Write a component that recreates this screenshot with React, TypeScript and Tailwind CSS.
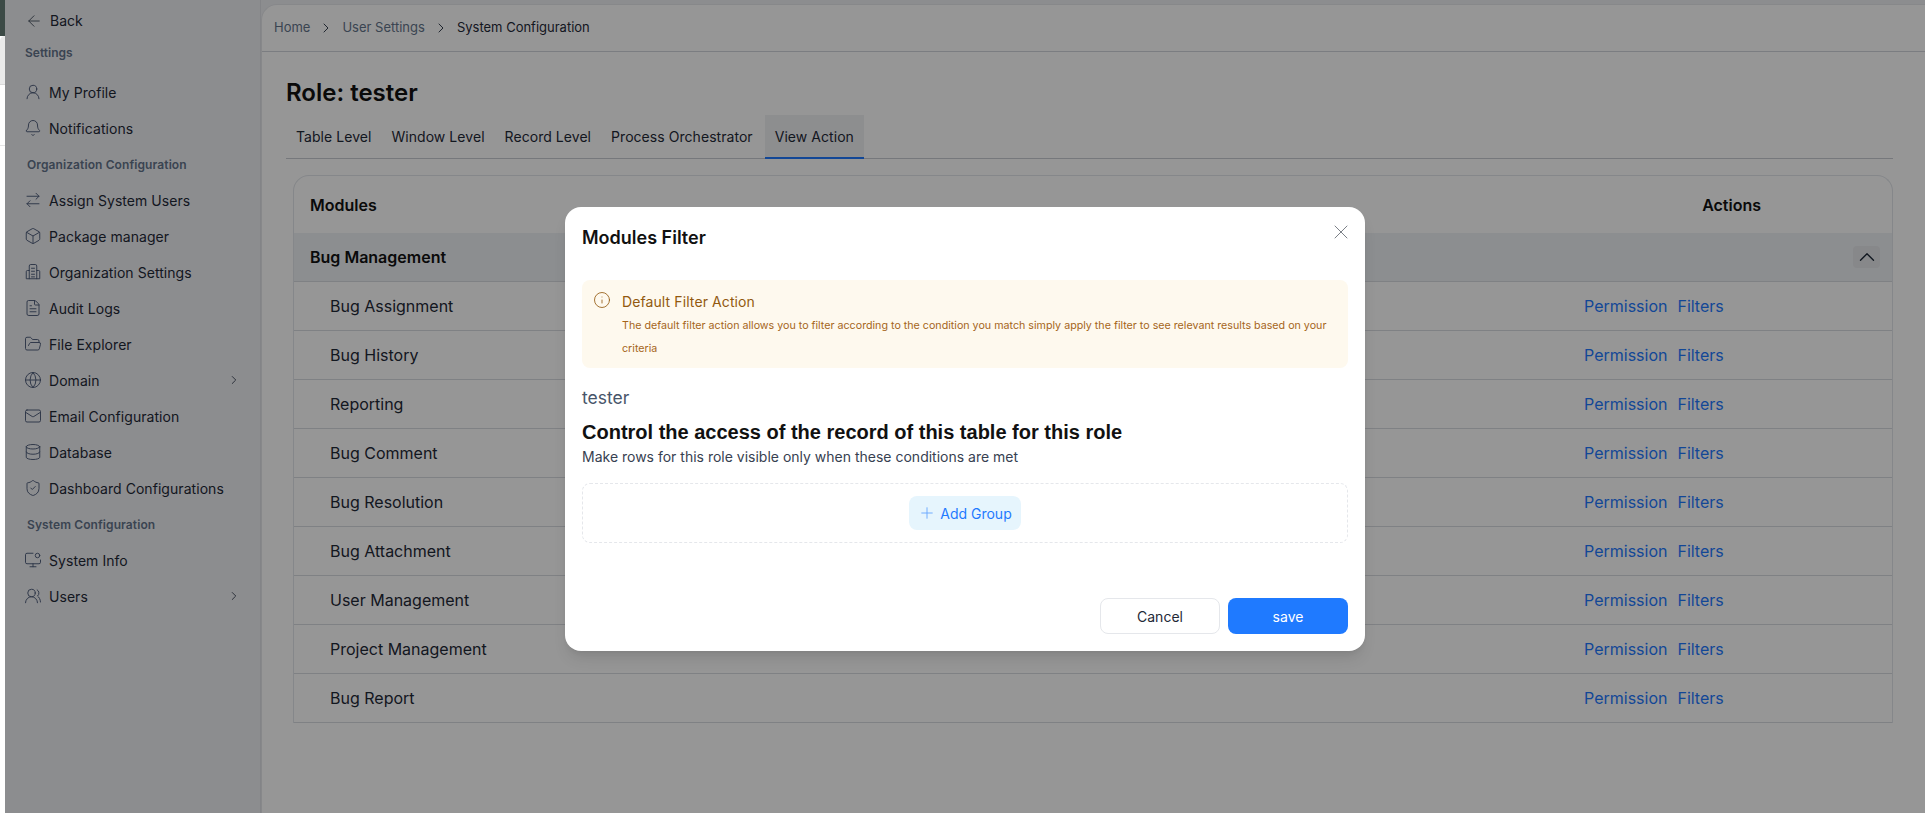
import {
  ArrowLeft,
  ArrowRightLeft,
  Bell,
  Box,
  ChevronRight,
  ChevronUp,
  Database,
  FileText,
  FolderOpen,
  Globe,
  Info,
  Mail,
  Plus,
  ShieldCheck,
  UserRound,
  UsersRound,
  X,
} from "lucide-react";
import type { ComponentType } from "react";

type IconType = ComponentType<{ className?: string; strokeWidth?: number }>;

const rows = [
  "Bug Assignment",
  "Bug History",
  "Reporting",
  "Bug Comment",
  "Bug Resolution",
  "Bug Attachment",
  "User Management",
  "Project Management",
  "Bug Report",
];

const tabs = ["Table Level", "Window Level", "Record Level", "Process Orchestrator"];

function OrgIcon({ className, strokeWidth }: { className?: string; strokeWidth?: number }) {
  return (
    <svg viewBox="0 0 24 24" fill="none" stroke="currentColor" strokeWidth={strokeWidth} strokeLinecap="round" strokeLinejoin="round" className={className}>
      <path d="M7 21V4a2 2 0 0 1 2-2h6a2 2 0 0 1 2 2v17" />
      <path d="M7 10H4.5A1.5 1.5 0 0 0 3 11.5V21h18v-9.500A1.500 1.500 0 0 0 19.500 10H17" />
      <path d="M10 7h4M10 11h4M10 15h4M10 18.500h4" />
    </svg>
  );
}

function SysInfoIcon({ className, strokeWidth }: { className?: string; strokeWidth?: number }) {
  return (
    <svg viewBox="0 0 24 24" fill="none" stroke="currentColor" strokeWidth={strokeWidth} strokeLinecap="round" strokeLinejoin="round" className={className}>
      <path d="M12 3H4a2 2 0 0 0-2 2v10a2 2 0 0 0 2 2h16a2 2 0 0 0 2-2v-3" />
      <path d="M12 17v4M8 21h8" />
      <circle cx="18" cy="6" r="3" />
    </svg>
  );
}

function NavItem({ icon: Icon, label, arrow }: { icon: IconType; label: string; arrow?: boolean }) {
  return (
    <div className="flex h-9 items-center pl-[19px] pr-[19px] text-[14px] text-[#1f2937] tracking-[0.05px]">
      <Icon className="mr-[7px] h-[18px] w-[18px] shrink-0 text-[#4b5a78]" strokeWidth={1.25} />
      <span className="flex-1">{label}</span>
      {arrow && <ChevronRight className="h-[14px] w-[14px] text-[#374151]" strokeWidth={1.5} />}
    </div>
  );
}

function GroupLabel({ children }: { children: string }) {
  return <div className="flex h-9 items-center pl-[22px] pt-[2px] text-[12px] font-semibold text-[#64748b] tracking-[0.1px]">{children}</div>;
}

function Sidebar() {
  return (
    <aside className="flex w-[256px] shrink-0 flex-col border-r border-[#dfe1e6] bg-[#eff0f4]">
      <div className="flex h-[38px] items-center pl-[20px] pt-[3px] text-[14px] text-[#1f2937]">
        <ArrowLeft className="mr-[7px] h-[18px] w-[18px] text-[#4b5563]" strokeWidth={1.25} />
        Back
      </div>
      <div className="mt-[2px] flex h-[26px] items-center pl-[20px] text-[12px] font-semibold text-[#64748b]">Settings</div>
      <div className="mt-[8px]">
        <NavItem icon={UserRound} label="My Profile" />
        <NavItem icon={Bell} label="Notifications" />
      </div>
      <GroupLabel>Organization Configuration</GroupLabel>
      <NavItem icon={ArrowRightLeft} label="Assign System Users" />
      <NavItem icon={Box} label="Package manager" />
      <NavItem icon={OrgIcon} label="Organization Settings" />
      <NavItem icon={FileText} label="Audit Logs" />
      <NavItem icon={FolderOpen} label="File Explorer" />
      <NavItem icon={Globe} label="Domain" arrow />
      <NavItem icon={Mail} label="Email Configuration" />
      <NavItem icon={Database} label="Database" />
      <NavItem icon={ShieldCheck} label="Dashboard Configurations" />
      <GroupLabel>System Configuration</GroupLabel>
      <NavItem icon={SysInfoIcon} label="System Info" />
      <NavItem icon={UsersRound} label="Users" arrow />
    </aside>
  );
}

function Main() {
  return (
    <main className="flex flex-1 flex-col bg-[#eff0f4] pt-[4px]">
      <div className="flex flex-1 flex-col rounded-tl-2xl border-l border-t border-[#e5e7eb] bg-white">
        <div className="flex h-[47px] shrink-0 items-center gap-[8px] border-b border-[#d1d5db] pl-[12px] text-[13px]">
          <span className="text-[#64748b]">Home</span>
          <ChevronRight className="h-[16px] w-[16px] text-[#374151]" strokeWidth={1.5} />
          <span className="text-[#64748b]">User Settings</span>
          <ChevronRight className="h-[16px] w-[16px] text-[#374151]" strokeWidth={1.5} />
          <span className="text-[#1f2937]">System Configuration</span>
        </div>
        <div className="flex flex-col pl-[24px] pr-[32px]">
          <h1 className="mt-[23px] h-[36px] text-[24px] leading-[36px] font-semibold text-[#111111]">Role: tester</h1>
          <div className="mt-[4px] flex h-[44px] items-stretch border-b border-[#c9cdd3] text-[14px] text-[#1f2937] tracking-[0.05px]">
            {tabs.map((t) => (
              <div key={t} className="flex items-center px-[10px]">{t}</div>
            ))}
            <div className="-mb-px ml-[2px] flex items-center border-b-2 border-[#1f7aff] bg-[#f0f1f4] px-[10px]">View Action</div>
          </div>
          <div className="ml-[7px] mt-[16px] overflow-hidden rounded-t-2xl border-x border-t border-[#e2e5ea]">
            <div className="flex h-[57px] items-center pl-[16px] pr-[131px] text-[16px] font-semibold text-[#111111]">
              <span className="flex-1">Modules</span>
              <span>Actions</span>
            </div>
            <div className="flex h-[49px] items-center border-b border-[#d9dce1] bg-[#eff1f5] pl-[16px] pr-[12px] text-[16px] font-semibold text-[#111111]">
              <span className="flex-1">Bug Management</span>
              <span className="flex h-[22px] w-[27px] items-center justify-center rounded-[4px] bg-[#e5e7eb]">
                <ChevronUp className="h-[26px] w-[26px] shrink-0 text-[#1f2937]" strokeWidth={1.25} />
              </span>
            </div>
            {rows.map((r) => (
              <div key={r} className="flex h-[49px] items-center border-b border-[#d9dce1] pl-[36px] text-[16px] text-[#1f2937]">
                <span className="flex-1">{r}</span>
                <span className="w-[308px] text-[#1f7aff]">
                  Permission<span className="ml-[10px]">Filters</span>
                </span>
              </div>
            ))}
          </div>
        </div>
      </div>
    </main>
  );
}

function Modal() {
  return (
    <div className="absolute left-[560px] top-[207px] flex h-[444px] w-[800px] flex-col rounded-2xl bg-white px-[17px] shadow-lg">
      <div className="flex h-[73px] shrink-0 items-start pt-[20px]">
        <h2 className="flex-1 text-[18px] font-semibold leading-[22px] text-[#111111]">Modules Filter</h2>
        <X className="-mr-[5px] -mt-[7px] h-[24px] w-[24px] text-[#7b8087]" strokeWidth={1} />
      </div>
      <div className="flex h-[88px] shrink-0 rounded-[8px] bg-[#fef9ee] pl-[11px] pr-[12px] pt-[11px]">
        <Info className="mr-[11px] h-[18px] w-[18px] shrink-0 text-[#92590f]" strokeWidth={1.1} />
        <div>
          <div className="mt-[2px] text-[14px] leading-[18px] text-[#92590f] tracking-[0.1px]">Default Filter Action</div>
          <p className="mt-[3px] text-[10.7px] leading-[23px] text-[#a5651a]">
            The default filter action allows you to filter according to the condition you match simply apply the filter to see relevant results based on your criteria
          </p>
        </div>
      </div>
      <div className="mt-[18px] text-[17.5px] leading-[24px] text-[#475569]">tester</div>
      <h3 className="mt-[10px] font-['Liberation_Sans',sans-serif] text-[20px] font-bold leading-[24px] text-[#111111]">
        Control the access of the record of this table for this role
      </h3>
      <p className="mt-[3px] text-[14px] leading-[20px] text-[#374151]">Make rows for this role visible only when these conditions are met</p>
      <div className="mt-[16px] flex h-[60px] shrink-0 items-center justify-center rounded-[8px] border border-dashed border-[#e5e7eb]">
        <div className="flex h-[34px] items-center rounded-[8px] bg-[#e6f5fd] px-[9px] text-[14px] text-[#1f7aff]">
          <Plus className="mr-[4px] h-[18px] w-[18px] text-[#6aa8ff]" strokeWidth={1.25} />
          Add Group
        </div>
      </div>
      <div className="mt-[55px] flex justify-end gap-[8px]">
        <div className="flex h-[36px] w-[120px] items-center justify-center rounded-[8px] border border-[#e5e7eb] text-[14px] text-[#1f2937]">Cancel</div>
        <div className="flex h-[36px] w-[120px] items-center justify-center rounded-[8px] bg-[#1f7aff] text-[14px] text-white">save</div>
      </div>
    </div>
  );
}

export default function App() {
  return (
    <div className="flex h-[813px] w-[1925px] overflow-hidden bg-white font-['Inter',sans-serif]">
      {/* sliver of the page behind the window */}
      <div className="flex w-[5px] shrink-0 flex-col">
        <div className="h-[36px] bg-[#3c4a46]" />
        <div className="h-[49px] rounded-tl-lg border-b border-[#d9d9d9] bg-[#eaeaea]" />
        <div className="h-[61px] border-b border-[#e5e5e5] bg-white" />
        <div className="flex-1 bg-white" />
      </div>
      <div className="relative flex flex-1">
        <Sidebar />
        <Main />
        <div className="absolute inset-0 bg-black/[0.41]" />
        <Modal />
      </div>
    </div>
  );
}
